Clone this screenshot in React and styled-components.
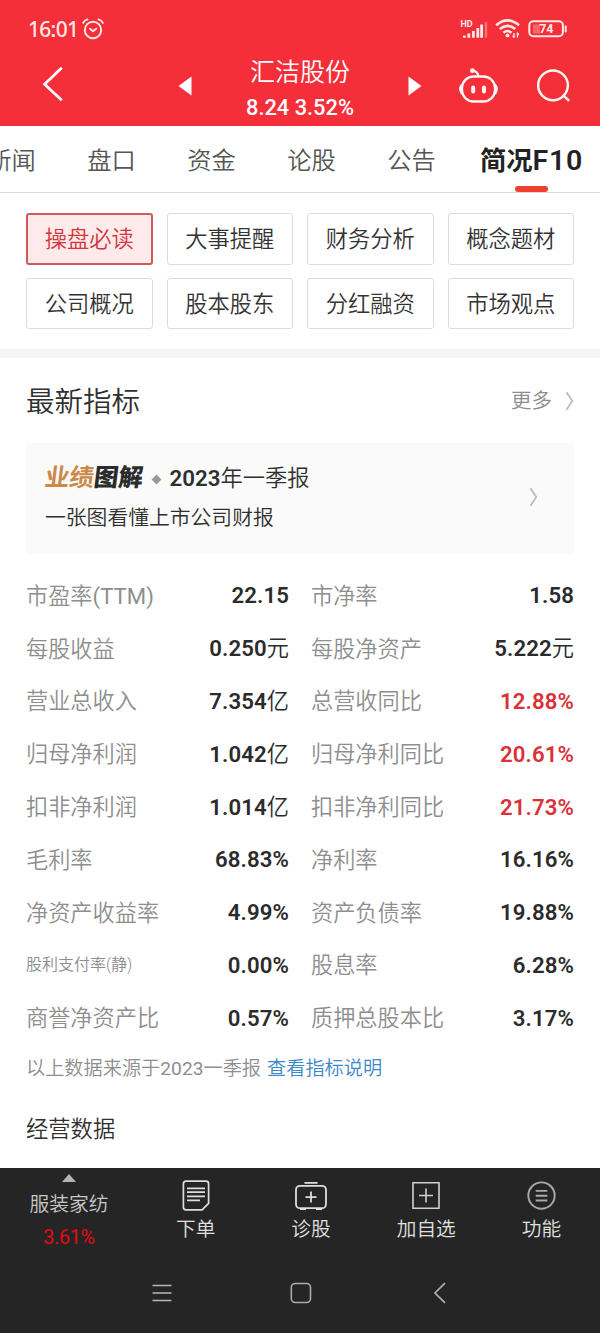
import React from "react";
import styled, { createGlobalStyle } from "styled-components";

const GlobalStyle = createGlobalStyle`
  * { box-sizing: border-box; }
  body { margin: 0; background: #fff; }
  svg { display: block; flex: none; }
`;

const Screen = styled.div`
  width: 600px;
  height: 1333px;
  display: flex;
  flex-direction: column;
  overflow: hidden;
  background: #fff;
  color: #2f2f2f;
  font-family: Roboto, "Noto Sans CJK SC", sans-serif;
  font-weight: 350;
  white-space: nowrap;
`;

const TopArea = styled.header`
  height: 126px;
  flex: none;
  background: #f42f3a;
  color: #fff;
`;

const StatusBar = styled.div`
  height: 58px;
  padding: 0 32px 0 28px;
  display: flex;
  align-items: center;
  justify-content: space-between;
`;

const StatusGroup = styled.div`
  display: flex;
  align-items: center;
  gap: ${(p) => p.$gap}px;
  color: #ffe9e4;
`;

const Clock = styled.span`
  font: 500 21px/28px "Noto Sans", sans-serif;
  letter-spacing: -0.7px;
`;

const TitleBar = styled.div`
  height: 68px;
  display: grid;
  grid-template-columns: 156px 58px 172px 58px 69px 81px;
`;

const BarButton = styled.div`
  height: ${(p) => p.$height || 55}px;
  display: flex;
  align-items: center;
  justify-content: ${(p) => (p.$start ? "flex-start" : "center")};
  padding-left: ${(p) => (p.$start ? 41 : 0)}px;
`;

const StockTitle = styled.div`
  display: flex;
  flex-direction: column;
  align-items: center;
`;

const StockName = styled.div`
  font-size: 25px;
  line-height: 30px;
`;

const StockPrice = styled.div`
  margin-top: 6px;
  font-size: 21.8px;
  font-weight: 500;
  line-height: 28px;
`;

const Tabs = styled.nav`
  height: 67px;
  flex: none;
  display: flex;
  border-bottom: 1px solid #d9d9d9;
`;

const Tab = styled.div`
  width: ${(p) => (p.$active ? 140 : 100)}px;
  flex: none;
  display: flex;
  flex-direction: column;
  align-items: center;
  color: ${(p) => (p.$active ? "#222" : "#555")};
  font-size: ${(p) => (p.$active ? 26.3 : 24.3)}px;
  font-weight: ${(p) => (p.$active ? 700 : 350)};
  padding-top: 5px;
  &:first-child { margin-left: -38.5px; }
`;

const TabText = styled.span`
  height: 55px;
  line-height: 60px;
  b { font-size: 28.5px; font-weight: 600; letter-spacing: 0.8px; }
`;

const TabMark = styled.div`
  width: 33px;
  height: 7px;
  border-radius: 3px;
  background: #f0402f;
  z-index: 1;
`;

const Chips = styled.div`
  flex: none;
  height: 156px;
  padding: 20px 26px 0;
  display: grid;
  grid-template-columns: repeat(4, 1fr);
  grid-template-rows: 52px 51px;
  gap: 13px 14px;
`;

const Chip = styled.div`
  border: ${(p) => (p.$active ? "2px solid #cf5a5e" : "1.5px solid #dcdcdc")};
  border-radius: 3px;
  background: ${(p) => (p.$active ? "#feeaea" : "#fff")};
  color: ${(p) => (p.$active ? "#d4353b" : "#333")};
  font-size: 22.3px;
  line-height: ${(p) => (p.$active ? 48 : 50)}px;
  text-align: center;
`;

const Divider = styled.div`
  height: 9px;
  flex: none;
  background: #f5f5f5;
`;

const Section = styled.main`
  flex: 1;
  min-height: 0;
  padding: 0 26px;
`;

const SectionHead = styled.div`
  height: 85px;
  display: flex;
  align-items: center;
  justify-content: space-between;
`;

const SectionTitle = styled.h2`
  margin: 5px 0 0;
  font-size: 28.5px;
  font-weight: 350;
  line-height: 40px;
`;

const More = styled.div`
  display: flex;
  align-items: center;
  gap: 13px;
  font-size: 20.5px;
  line-height: 28px;
  color: #8c8c8c;
`;

const ReportCard = styled.div`
  height: 111px;
  padding: 17px 36px 0 19px;
  display: flex;
  justify-content: space-between;
  background: #fafafa;
`;

const ReportLine = styled.div`
  height: 36px;
  display: flex;
  align-items: center;
  font-size: 22.3px;
  line-height: 26px;
  b { font-weight: 600; }
`;

const Brand = styled.span`
  width: 98px;
  font-size: 24.5px;
  font-weight: 900;
  color: #2c2c2c;
  transform: skewX(-7deg);
  em { font-style: normal; font-weight: 700; color: #cb8847; }
`;

const Diamond = styled.i`
  width: 7px;
  height: 7px;
  margin: 2px 9.5px 0 10px;
  background: #999;
  transform: rotate(45deg);
`;

const ReportHint = styled.div`
  font-size: 20.8px;
  line-height: 45px;
`;

const CardArrow = styled.div`
  padding-top: 27px;
`;

const Metrics = styled.div`
  margin-top: 15px;
  display: grid;
  grid-template-columns: 263px 263px;
  column-gap: 22px;
  grid-auto-rows: 52.8px;
`;

const Metric = styled.div`
  display: flex;
  align-items: center;
  justify-content: space-between;
  line-height: 26px;
`;

const Label = styled.span`
  padding-top: 1px;
  color: #8e8e8e;
  font-size: ${(p) => (p.$small ? 16 : 22.2)}px;
`;

const Latin = styled.span`
  font-weight: 400;
`;

const Value = styled.span`
  color: ${(p) => (p.$up ? "#dc3038" : "#2b2b2b")};
  font-size: 22.2px;
  b { font-weight: 600; letter-spacing: 0.1px; }
`;

const Note = styled.div`
  margin-top: 4px;
  height: 40px;
  line-height: 41px;
  font-size: 19.2px;
  color: #8e8e8e;
  a { color: #3d87cb; margin-left: 6px; }
`;

const SubTitle = styled.h3`
  margin: 21px 0 0;
  font-size: 22.3px;
  font-weight: 350;
  line-height: 40px;
`;

const Toolbar = styled.footer`
  flex: none;
  height: 97px;
  background: #252525;
  color: #e0e0e0;
  display: grid;
  grid-template-columns: 138px repeat(4, 115.3px);
`;

const Tool = styled.div`
  display: flex;
  flex-direction: column;
  align-items: center;
  padding-top: 11px;
  font-size: 19.7px;
  svg { height: 33px; }
  span { line-height: 36px; }
`;

const Sector = styled.div`
  display: flex;
  flex-direction: column;
  align-items: center;
  padding-top: 6px;
  font-size: 19.8px;
  color: #c8c8c8;
  span { line-height: 45px; height: 38px; }
`;

const SectorChange = styled.strong`
  font-weight: 400;
  line-height: 36px;
  letter-spacing: -0.3px;
  color: #e60a12;
`;

const SystemNav = styled.div`
  flex: none;
  height: 68px;
  padding: 15px 93px 0;
  background: #252525;
  display: grid;
  grid-template-columns: repeat(3, 138.6px);
  justify-items: center;
`;

const AlarmIcon = () => (
  <svg width="22" height="22" viewBox="0 0 22 22" fill="none" stroke="currentColor" strokeWidth="1.9" strokeLinecap="round">
    <circle cx="11" cy="12" r="8.2" />
    <path d="M1.2 4.8Q2.5 2.2 5.5 1.4M20.8 4.8Q19.5 2.2 16.5 1.4M8 10.8l3 2.5 3.2-2.6" />
  </svg>
);

const SignalIcon = () => (
  <svg width="28" height="20" viewBox="0 0 28 20" fill="currentColor">
    <path d="M3 16.5h2.8v2.2H3zM7.4 14.6h2.8v4.1H7.4zM12 12h2.8v6.7H12zM16.4 9h2.8v9.7h-2.8zM20.2 5.5H23v13.2h-2.8z" />
    <path d="M24.8 3h2.4v15.7h-2.4z" opacity=".35" />
    <text x="0.5" y="8.2" fontSize="9" fontWeight="700" fontFamily="Roboto, sans-serif">HD</text>
  </svg>
);

const WifiIcon = () => (
  <svg width="26" height="22" viewBox="0 0 26 22" fill="none" stroke="currentColor" strokeWidth="2.6">
    <path d="M1.2 7.2Q12.5-2.5 24 7.2M4.8 11.1Q12.5 4.6 20.3 11.1M8.4 14.8Q12.5 11.2 16.6 14.8" />
    <circle cx="12.5" cy="17.4" r="1.9" fill="currentColor" stroke="none" />
    <path d="M19 20v-5M22.4 14.5v5M17.6 17.6L19 19.4M22.4 15l1.5 1.8" strokeWidth="1.4" />
  </svg>
);

const BatteryIcon = () => (
  <svg width="40" height="18" viewBox="0 0 40 18" fill="none" stroke="currentColor">
    <rect x="1.3" y="1.3" width="33.6" height="15" rx="4" strokeWidth="2" />
    <path d="M37.7 6.5v5" strokeWidth="2" strokeLinecap="round" />
    <path d="M5 4.4h7v9H5z" fill="currentColor" stroke="none" opacity=".3" />
    <text x="18.3" y="13.3" textAnchor="middle" fill="currentColor" stroke="none" fontSize="12.5" fontWeight="700" fontFamily="Roboto, sans-serif">74</text>
  </svg>
);

const BackIcon = () => (
  <svg width="23" height="36" viewBox="0 0 23 36" fill="none" stroke="#fff" strokeWidth="2.8">
    <path d="M20.8 1.7L3.6 18.2 20.8 34.3" />
  </svg>
);

const Triangle = ({ right }) => (
  <svg width="14" height="20" viewBox="0 0 14 20" fill="#fff">
    <path d={right ? "M.5.5L13.5 10 .5 19.5z" : "M13.5.5L.5 10l13 9.5z"} />
  </svg>
);

const RobotIcon = () => (
  <svg width="39" height="35" viewBox="0 0 39 35" fill="none" stroke="#fff5f2" strokeWidth="2.3" strokeLinecap="round">
    <rect x="3" y="8.5" width="33" height="25" rx="11.5" />
    <path d="M2.6 17.2Q-.1 21 2.600 25M36.400 17.200q2.700 3.800 0 7.800M19.300 8C19 5 17 3.300 13.800 2.700" />
    <circle cx="13.400" cy="2.700" r="1.200" fill="#fff" />
    <path d="M14.200 19.500v4M25 19.500v4" strokeWidth="4" />
  </svg>
);

const SearchIcon = () => (
  <svg width="34" height="34" viewBox="0 0 35 35" fill="none" stroke="#fff5f2" strokeWidth="2.5">
    <circle cx="16.5" cy="16.8" r="15.3" />
    <path d="M26.3 26.5l6.800 6.300" />
  </svg>
);

const Chevron = () => (
  <svg width="9" height="20" viewBox="0 0 9 20" fill="none" stroke="#bababa" strokeWidth="1.7">
    <path d="M1.5 1.2L7.3 10 1.5 18.8" />
  </svg>
);

const OrderIcon = () => (
  <svg width="28" height="33" viewBox="0 0 28 33" fill="none" stroke="#dedede" strokeWidth="1.7">
    <path d="M4 2.2h20q2.6 0 2.6 2.6v19.5l-6.5 6.5H4q-2.6 0-2.6-2.6V4.8Q1.4 2.2 4 2.2z" />
    <path d="M5 9.4h18M5 13.2h18M5 17.3h18M5 21.3h13" />
  </svg>
);

const DiagnoseIcon = () => (
  <svg width="34" height="33" viewBox="0 0 34 33" fill="none" stroke="#dedede" strokeWidth="1.8">
    <rect x="2" y="6.8" width="30" height="22.4" rx="4" />
    <path d="M10.5 3.8h13M17 12.6v11M11.5 18.1h11M6 30.2h6M22 30.2h6" />
  </svg>
);

const AddIcon = () => (
  <svg width="28" height="33" viewBox="0 0 28 33" fill="none" stroke="#d2d2d2" strokeWidth="1.6">
    <path d="M1 3.8h26v25.5H1zM14 9.5v14M7 16.5h14" />
  </svg>
);

const MenuIcon = () => (
  <svg width="29" height="33" viewBox="0 0 29 33" fill="none" stroke="#aaa" strokeWidth="1.9">
    <circle cx="14.5" cy="16.6" r="13.2" />
    <path d="M8.7 11.9h11.6M8.7 16.7h11.6M8.7 21.5h11.6" />
  </svg>
);

const tabs = ["新闻", "盘口", "资金", "论股", "公告"];
const chips = ["操盘必读", "大事提醒", "财务分析", "概念题材", "公司概况", "股本股东", "分红融资", "市场观点"];
const metrics = [
  { label: "市盈率", suffix: "(TTM)", value: "22.15" },
  { label: "市净率", value: "1.58" },
  { label: "每股收益", value: "0.250", unit: "元" },
  { label: "每股净资产", value: "5.222", unit: "元" },
  { label: "营业总收入", value: "7.354", unit: "亿" },
  { label: "总营收同比", value: "12.88%", up: true },
  { label: "归母净利润", value: "1.042", unit: "亿" },
  { label: "归母净利同比", value: "20.61%", up: true },
  { label: "扣非净利润", value: "1.014", unit: "亿" },
  { label: "扣非净利同比", value: "21.73%", up: true },
  { label: "毛利率", value: "68.83%" },
  { label: "净利率", value: "16.16%" },
  { label: "净资产收益率", value: "4.99%" },
  { label: "资产负债率", value: "19.88%" },
  { label: "股利支付率(静)", value: "0.00%", small: true },
  { label: "股息率", value: "6.28%" },
  { label: "商誉净资产比", value: "0.57%" },
  { label: "质押总股本比", value: "3.17%" },
];
const tools = [
  { label: "下单", Icon: OrderIcon },
  { label: "诊股", Icon: DiagnoseIcon },
  { label: "加自选", Icon: AddIcon },
  { label: "功能", Icon: MenuIcon },
];

export default function App() {
  return (
    <Screen>
      <GlobalStyle />
      <TopArea>
        <StatusBar>
          <StatusGroup $gap={4}>
            <Clock>16:01</Clock>
            <AlarmIcon />
          </StatusGroup>
          <StatusGroup $gap={7}>
            <SignalIcon />
            <WifiIcon />
            <BatteryIcon />
          </StatusGroup>
        </StatusBar>
        <TitleBar>
          <BarButton $start $height={52}><BackIcon /></BarButton>
          <BarButton><Triangle /></BarButton>
          <StockTitle>
            <StockName>汇洁股份</StockName>
            <StockPrice>8.24 3.52%</StockPrice>
          </StockTitle>
          <BarButton><Triangle right /></BarButton>
          <BarButton $height={54}><RobotIcon /></BarButton>
          <BarButton><SearchIcon /></BarButton>
        </TitleBar>
      </TopArea>
      <Tabs>
        {tabs.map((t) => <Tab key={t}><TabText>{t}</TabText></Tab>)}
        <Tab $active>
          <TabText>简况<b>F10</b></TabText>
          <TabMark />
        </Tab>
      </Tabs>
      <Chips>
        {chips.map((c, i) => <Chip key={c} $active={i === 0}>{c}</Chip>)}
      </Chips>
      <Divider />
      <Section>
        <SectionHead>
          <SectionTitle>最新指标</SectionTitle>
          <More>更多<Chevron /></More>
        </SectionHead>
        <ReportCard>
          <div>
            <ReportLine>
              <Brand><em>业绩</em>图解</Brand>
              <Diamond />
              <span><b>2023</b>年一季报</span>
            </ReportLine>
            <ReportHint>一张图看懂上市公司财报</ReportHint>
          </div>
          <CardArrow><Chevron /></CardArrow>
        </ReportCard>
        <Metrics>
          {metrics.map((m) => (
            <Metric key={m.label}>
              <Label $small={m.small}>{m.label}{m.suffix && <Latin>{m.suffix}</Latin>}</Label>
              <Value $up={m.up}><b>{m.value}</b>{m.unit}</Value>
            </Metric>
          ))}
        </Metrics>
        <Note>以上数据来源于<Latin>2023</Latin>一季报<a>查看指标说明</a></Note>
        <SubTitle>经营数据</SubTitle>
      </Section>
      <Toolbar>
        <Sector>
          <svg width="14" height="8" viewBox="0 0 14 8"><path d="M7 0l7 8H0z" fill="#b5b5b5" /></svg>
          <span>服装家纺</span>
          <SectorChange>3.61%</SectorChange>
        </Sector>
        {tools.map(({ label, Icon }) => (
          <Tool key={label}><Icon /><span>{label}</span></Tool>
        ))}
      </Toolbar>
      <SystemNav>
        <svg width="20" height="26" viewBox="0 0 20 26" stroke="#b8b8b8" strokeWidth="1.6"><path d="M.5 5.5h19M.5 13h19M.5 20.5h19" /></svg>
        <svg width="22" height="26" viewBox="0 0 22 26" fill="none" stroke="#aaa" strokeWidth="1.6"><rect x="1.3" y="3.5" width="19.2" height="19" rx="4" /></svg>
        <svg width="13" height="26" viewBox="0 0 13 26" fill="none" stroke="#b0b0b0" strokeWidth="1.7"><path d="M12 3.2L2 13l10 9.8" /></svg>
      </SystemNav>
    </Screen>
  );
}
